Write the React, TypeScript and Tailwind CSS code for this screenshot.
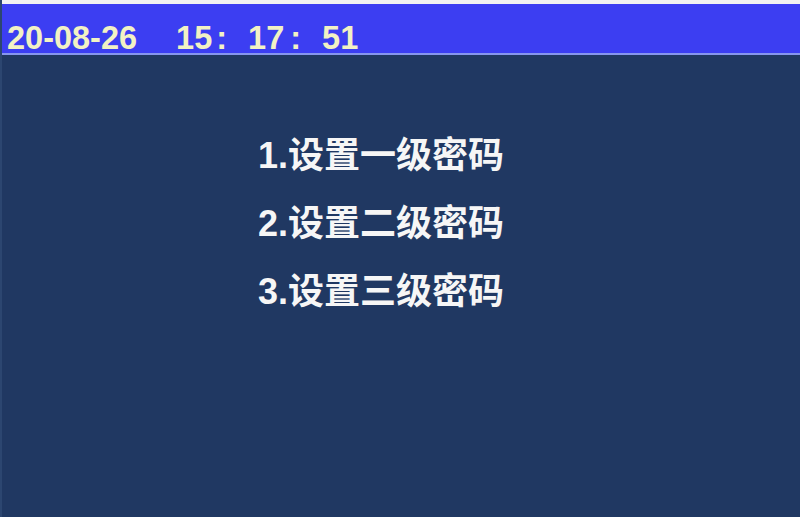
export default function App() {
  return (
    <div className="w-[800px] h-[517px] overflow-hidden flex flex-col bg-[#203862] border-l-2 border-[#2c4670]">
      <div className="h-[4px] bg-[#f2f2f2]" />
      <div className="h-[49px] bg-[#3c3ef2] flex items-start pt-[18px] text-[#f2f2c4] font-bold text-[32.5px] leading-none" style={{ fontFamily: '"Liberation Sans", "Noto Sans CJK SC", sans-serif' }}>
        <span className="ml-[5px]">20-08-26</span>
        <span className="ml-[39px]">15</span>
        <span className="ml-[4px]">:</span>
        <span className="ml-[21px]">17</span>
        <span className="ml-[6px]">:</span>
        <span className="ml-[21px]">51</span>
      </div>
      <div className="h-[2px] bg-[#8796ee]" />
      <div className="flex-1 flex flex-col pl-[256px] pt-[67px] text-[#f6f6f6] font-bold text-[36px] leading-[68px]" style={{ fontFamily: '"Liberation Sans", "Noto Sans CJK SC", sans-serif' }}>
        <div>1.设置一级密码</div>
        <div>2.设置二级密码</div>
        <div>3.设置三级密码</div>
      </div>
    </div>
  );
}
